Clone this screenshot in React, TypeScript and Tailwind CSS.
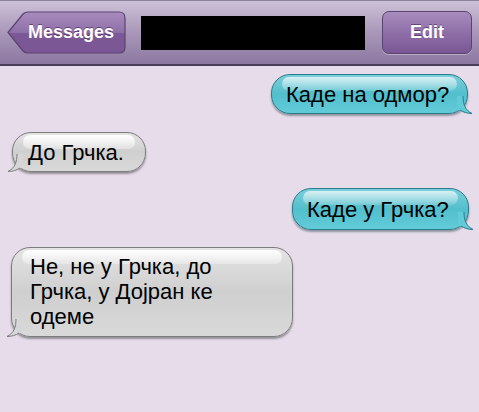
import type { ReactNode } from 'react'

function Tail({ side, fill, stroke }: { side: 'left' | 'right'; fill: string; stroke: string }) {
	const flip = side === 'left'
	return (
		<svg
			aria-hidden="true"
			width="16"
			height="18"
			viewBox="0 0 16 18"
			className={flip ? 'absolute -left-[6px] -bottom-[1px] -scale-x-100' : 'absolute -right-[6px] -bottom-[1px]'}
		>
			<path d="M0 0 L6 0 C6 8 8 14 15 17.5 C10 17.5 6 16 3 14 L0 14 Z" fill={fill} />
			<path d="M6 0 C6 8 8 14 15 17.5 C10 17.5 6 16 3 14" fill="none" stroke={stroke} strokeWidth="1" />
		</svg>
	)
}

function Bubble({ mine, className, children }: { mine?: boolean; className?: string; children: ReactNode }) {
	return (
		<div
			className={`relative rounded-[19px] border text-[22px] text-black ${
				mine
					? 'border-[#2b7b8a] bg-gradient-to-b from-[#7ccfdb] via-[#52bfcd] to-[#62cbd8] shadow-[0_2px_2px_rgba(40,60,70,0.45)]'
					: 'border-[#7c7c7c] bg-gradient-to-b from-[#e4e4e4] via-[#cfcfcf] to-[#d9d9d9] shadow-[0_2px_2px_rgba(50,50,50,0.45)]'
			} ${className ?? ''}`}
		>
			<div
				aria-hidden="true"
				className={`absolute left-[10px] right-[10px] top-[2px] h-[14px] rounded-full bg-gradient-to-b ${
					mine ? 'from-white/70 to-white/15' : 'from-white/95 to-white/30'
				}`}
			/>
			<Tail side={mine ? 'right' : 'left'} fill={mine ? '#62cbd8' : '#d6d6d6'} stroke={mine ? '#2b7b8a' : '#7c7c7c'} />
			<div className="relative">{children}</div>
		</div>
	)
}

export default function App() {
	return (
		<div className="h-[412px] w-[479px] overflow-hidden bg-[#e6dcea] font-['Liberation_Sans',Arial,sans-serif]">
			<div className="flex h-[66px] items-center border-t border-t-[#8d8596] border-b-2 border-b-[#4a3d57] bg-gradient-to-b from-[#cdc1d8] via-[#a997b9] to-[#8c78a1] pl-[7px] pr-[7px]">
				<div className="relative flex h-[43px] w-[119px] items-center justify-end pr-[12px]">
					<svg aria-hidden="true" className="absolute inset-0" width="119" height="43" viewBox="0 0 119 43">
						<defs>
							<linearGradient id="backBtn" x1="0" y1="0" x2="0" y2="1">
								<stop offset="0" stopColor="#a88cbd" />
								<stop offset="0.5" stopColor="#8f6fa8" />
								<stop offset="0.5" stopColor="#7c5996" />
								<stop offset="1" stopColor="#7a5794" />
							</linearGradient>
						</defs>
						<path
							d="M1 21.5 L16 3 Q18 1 21 1 L112 1 Q118 1 118 7 L118 36 Q118 42 112 42 L21 42 Q18 42 16 40 Z"
							fill="url(#backBtn)"
							stroke="#5a4470"
							strokeWidth="1.2"
						/>
					</svg>
					<span className="relative text-[18px] font-bold text-white [text-shadow:0_-1px_0_rgba(60,30,80,0.6)]">
						Messages
					</span>
				</div>
				<div className="ml-[15px] h-[34px] w-[224px] bg-black" />
				<div className="ml-auto flex h-[43px] w-[90px] items-center justify-center rounded-[7px] border border-[#5a4470] bg-gradient-to-b from-[#a88cbd] via-[#8f6fa8] to-[#7a5794] shadow-[0_1px_0_rgba(255,255,255,0.35)]">
					<span className="text-[18px] font-bold text-white [text-shadow:0_-1px_0_rgba(60,30,80,0.6)]">Edit</span>
				</div>
			</div>

			<div className="flex flex-col">
				<div className="mt-[8px] flex justify-end pr-[11px]">
					<Bubble mine className="flex h-[40px] w-[197px] items-center pl-[14px]">
						Каде на одмор?
					</Bubble>
				</div>
				<div className="mt-[18px] flex justify-start pl-[12px]">
					<Bubble className="flex h-[40px] w-[134px] items-center pl-[15px]">До Грчка.</Bubble>
				</div>
				<div className="mt-[16px] flex justify-end pr-[10px]">
					<Bubble mine className="flex h-[42px] w-[177px] items-center pl-[14px]">
						Каде у Грчка?
					</Bubble>
				</div>
				<div className="mt-[17px] flex justify-start pl-[11px]">
					<Bubble className="h-[90px] w-[282px] pl-[18px] pr-[50px] pt-[6px] leading-[25px]">
						Не, не у Грчка, до Грчка, у Дојран ке одеме
					</Bubble>
				</div>
			</div>
		</div>
	)
}
